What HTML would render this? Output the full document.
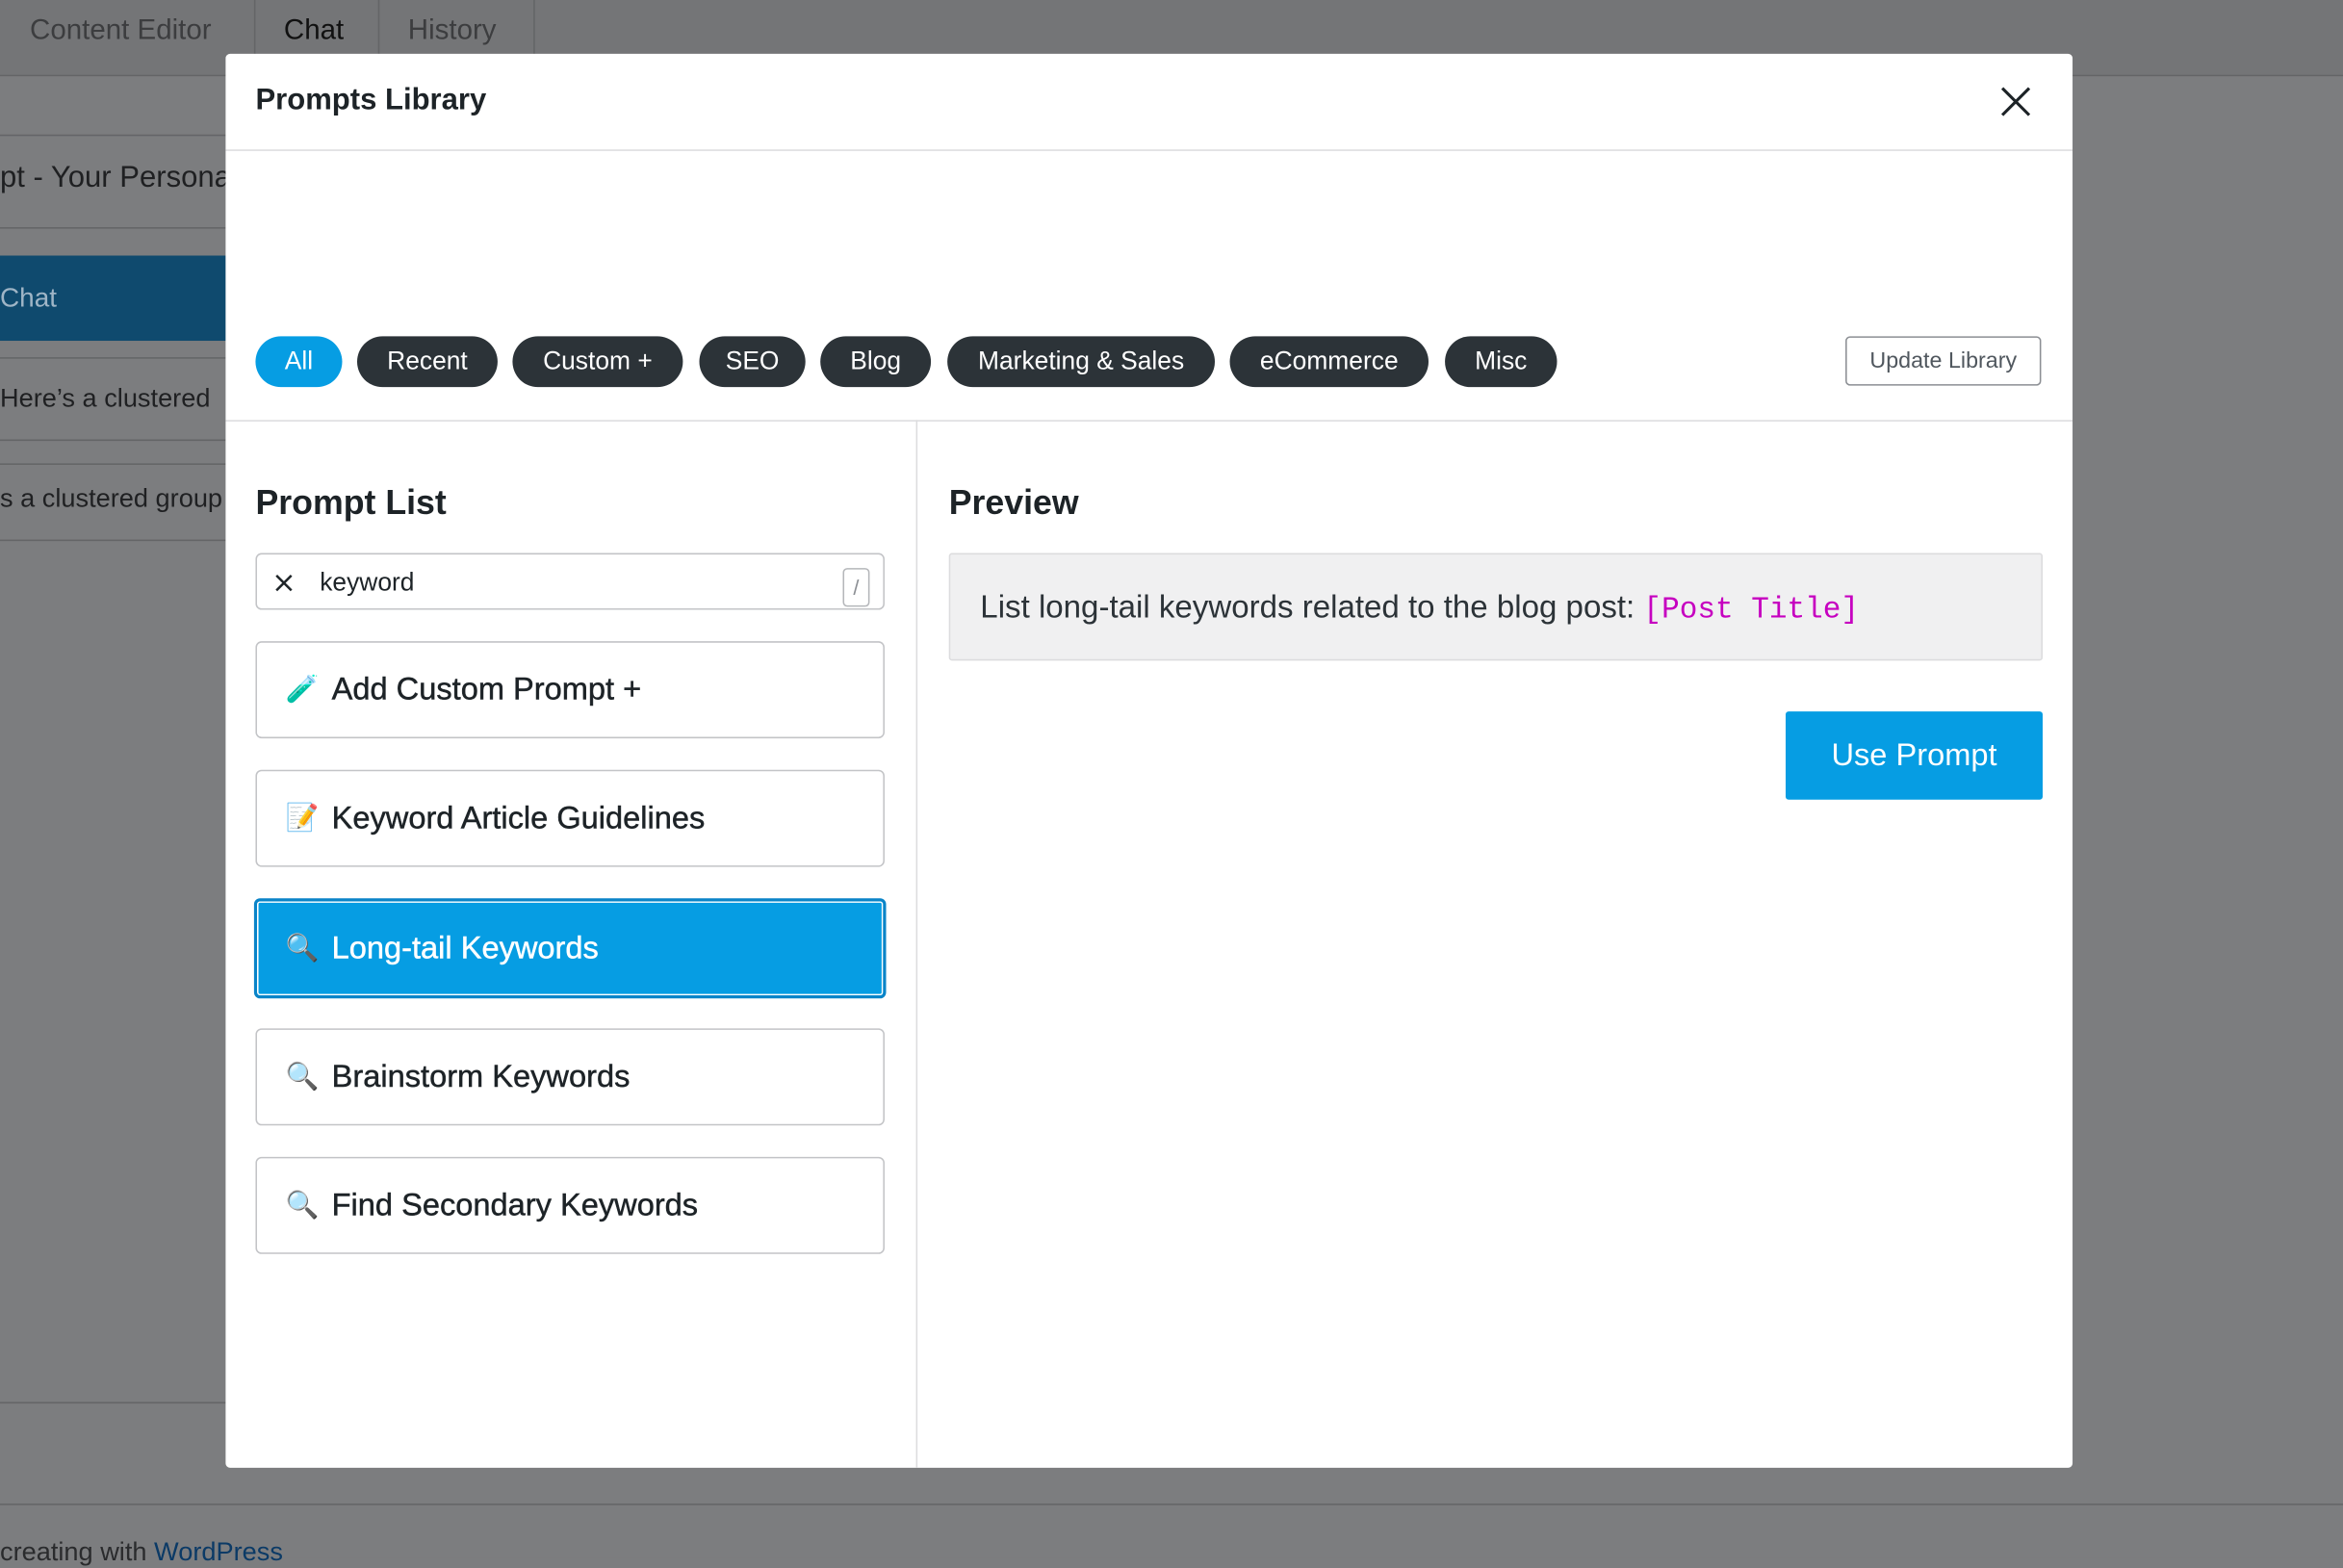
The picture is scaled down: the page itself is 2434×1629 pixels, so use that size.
<!DOCTYPE html>
<html><head><meta charset="utf-8"><style>
html,body{margin:0;padding:0;width:2434px;height:1618px;overflow:hidden;background:#7c7d7f;}
#w{position:absolute;left:0;top:0;width:1568px;height:1042px;transform:scale(1.5523,1.5528);transform-origin:0 0;font-family:"Liberation Sans",sans-serif;background:#7c7d7f;}
.a{position:absolute;}
.tab{position:absolute;top:0;height:50px;line-height:42px;font-size:19px;color:#3a3b3d;}
.line{position:absolute;left:0;height:1px;background:#646567;}
.pill{position:absolute;top:225px;height:34px;line-height:34px;border-radius:17px;background:#2c3338;color:#fff;font-size:17px;text-align:center;}
.item{position:absolute;left:171px;width:419px;height:63px;border:1px solid #c3c4c7;border-radius:4px;background:#fff;font-size:21px;color:#1d2327;line-height:63px;}
.item span.i{position:absolute;left:19px;font-size:18px;}
.item span.t{position:absolute;left:50px;-webkit-text-stroke:0.3px currentColor;}
</style></head><body><div id="w">
<div class="a" style="left:0;top:0;width:1568px;height:50px;background:#747577"></div>
<div class="line" style="top:50px;width:1568px"></div>
<div class="tab" style="left:20px;color:#3c3d3f">Content Editor</div>
<div class="a" style="left:170px;top:0;width:1px;height:50px;background:#646567"></div>
<div class="tab" style="left:190px;color:#111">Chat</div>
<div class="a" style="left:253px;top:0;width:1px;height:50px;background:#646567"></div>
<div class="tab" style="left:273px;color:#3c3d3f">History</div>
<div class="a" style="left:357px;top:0;width:1px;height:50px;background:#646567"></div>
<div class="line" style="top:90px;width:151px"></div>
<div class="a" style="left:0;top:108px;font-size:20px;color:#1f2022;white-space:nowrap">pt - Your Personal</div>
<div class="line" style="top:152px;width:151px"></div>
<div class="a" style="left:0;top:171px;width:151px;height:57px;background:#0f4a6e;color:#9fb5c6;font-size:18px;line-height:57px">Chat</div>
<div class="line" style="top:239px;width:151px"></div>
<div class="a" style="left:0;top:256px;font-size:17.5px;color:#1f2022;white-space:nowrap">Here’s a clustered</div>
<div class="line" style="top:294px;width:151px"></div>
<div class="line" style="top:310px;width:151px"></div>
<div class="a" style="left:0;top:323px;font-size:17.5px;color:#1f2022;white-space:nowrap">s a clustered group</div>
<div class="line" style="top:361px;width:151px"></div>
<div class="line" style="top:938px;width:151px"></div>
<div class="line" style="top:1006px;width:1568px"></div>
<div class="a" style="left:0;top:1028px;font-size:17.5px;color:#2a2b2d;white-space:nowrap">creating with <span style="color:#0b3a66">WordPress</span></div>

<div class="a" style="left:151px;top:36px;width:1236px;height:946px;background:#fff;border-radius:3px;overflow:hidden">
 <div class="a" style="left:20px;top:20px;font-size:20px;font-weight:bold;color:#1d2327">Prompts Library</div>
 <svg class="a" style="left:1188px;top:22px" width="20" height="20" viewBox="0 0 20 20"><path d="M1 1L19 19M19 1L1 19" stroke="#1d2327" stroke-width="2"/></svg>
 <div class="a" style="left:0;top:64px;width:1236px;height:1px;background:#dcdcde"></div>
 <div class="a" style="left:0;top:245px;width:1236px;height:1px;background:#dcdcde"></div>
 <div class="a" style="left:462px;top:245px;width:1px;height:701px;background:#dcdcde"></div>
 <div class="a" style="left:20px;top:287px;font-size:23px;font-weight:bold;color:#1d2327">Prompt List</div>
 <div class="a" style="left:484px;top:287px;font-size:23px;font-weight:bold;color:#1d2327">Preview</div>
 <div class="a" style="left:1084px;top:189px;width:129px;height:31px;border:1px solid #8c8f94;border-radius:3px;font-size:15px;line-height:31px;text-align:center;color:#50575e">Update Library</div>
 <div class="a" style="left:484px;top:334px;width:730px;height:70px;background:#f0f0f1;border:1px solid #dcdcde;border-radius:2px;font-size:21.3px;line-height:70px;color:#2c3338;white-space:nowrap"><span style="margin-left:20px">List long-tail keywords related to the blog post: </span><span style="font-family:'Liberation Mono',monospace;font-size:20px;color:#c600c0">[Post Title]</span></div>
 <div class="a" style="left:1044px;top:440px;width:172px;height:59px;background:#069de3;border-radius:2px;color:#fff;font-size:21px;line-height:59px;text-align:center">Use Prompt</div>
</div>

<div class="pill" style="left:171px;width:58px;background:#069de3">All</div>
<div class="pill" style="left:239px;width:94px">Recent</div>
<div class="pill" style="left:343px;width:114px">Custom +</div>
<div class="pill" style="left:468px;width:71px">SEO</div>
<div class="pill" style="left:549px;width:74px">Blog</div>
<div class="pill" style="left:634px;width:179px">Marketing &amp; Sales</div>
<div class="pill" style="left:823px;width:133px">eCommerce</div>
<div class="pill" style="left:967px;width:75px">Misc</div>

<div class="a" style="left:171px;top:370px;width:419px;height:36px;border:1px solid #c3c4c7;border-radius:4px;background:#fff">
 <svg class="a" style="left:12px;top:13px" width="12" height="12" viewBox="0 0 12 12"><path d="M1 1L11 11M11 1L1 11" stroke="#1d2327" stroke-width="1.6"/></svg>
 <div class="a" style="left:42px;top:9px;font-size:17px;color:#1d2327">keyword</div>
 <div class="a" style="left:392px;top:9px;width:16px;height:24px;border:1px solid #b5b7ba;border-radius:3px;font-size:14px;color:#8c8f94;text-align:center;line-height:24px">/</div>
</div>
<div class="item" style="top:429px"><span class="i" style="color:#2a9d2a">🧪</span><span class="t">Add Custom Prompt +</span></div>
<div class="item" style="top:515px"><span class="i">📝</span><span class="t">Keyword Article Guidelines</span></div>
<div class="item" style="top:601px;background:#069de3;border:2px solid #0a84c8;left:170px;width:419px;color:#fff;box-shadow:inset 0 0 0 1px #fff"><span class="i">🔍</span><span class="t">Long-tail Keywords</span></div>
<div class="item" style="top:688px"><span class="i">🔍</span><span class="t">Brainstorm Keywords</span></div>
<div class="item" style="top:774px"><span class="i">🔍</span><span class="t">Find Secondary Keywords</span></div>
</div></body></html>
